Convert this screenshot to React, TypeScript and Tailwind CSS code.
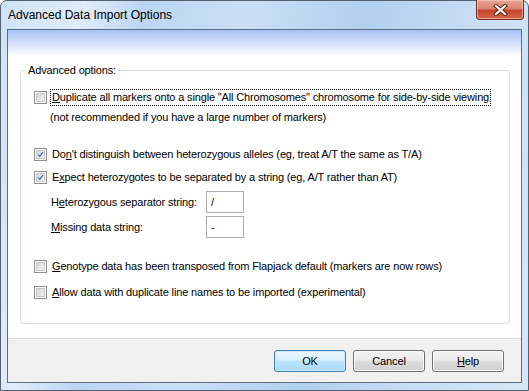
import React from "react";

function Check({ checked }: { checked?: boolean }) {
  return (
    <div className="w-[13px] h-[13px] border border-[#8e8f8f] bg-white p-[1px] shrink-0">
      <div className="w-full h-full border border-[#c9c9c9] bg-[linear-gradient(135deg,#d5d5d5,#f4f4f4)] relative">
        {checked && (
          <svg viewBox="0 0 9 9" className="absolute inset-0 w-full h-full">
            <path d="M1.5 4.6 L3.6 6.8 L7.6 1.6" fill="none" stroke="#4a64a8" strokeWidth="1.6" />
          </svg>
        )}
      </div>
    </div>
  );
}

function Row({ checked, children, focus, cls }: { checked?: boolean; children: React.ReactNode; focus?: boolean; cls: string }) {
  return (
    <div className={"flex items-center h-[20px] gap-[3px] " + cls}>
      <Check checked={checked} />
      <span className={"px-[1px] leading-[15px] " + (focus ? "border border-dotted border-black" : "border border-transparent")}>
        {children}
      </span>
    </div>
  );
}

function Btn({ children, def }: { children: React.ReactNode; def?: boolean }) {
  return (
    <div
      className={
        "w-[72px] h-[22px] rounded-[3px] border flex items-center justify-center " +
        (def
          ? "border-[#3c7fb1] bg-[linear-gradient(to_bottom,#eaf6fd_0%,#d9f0fc_45%,#bee6fd_50%,#a7d9f5_100%)] shadow-[inset_0_0_0_1px_#d0ecfa]"
          : "border-[#707070] bg-[linear-gradient(to_bottom,#f2f2f2_0%,#ebebeb_45%,#dddddd_50%,#cfcfcf_100%)] shadow-[inset_0_0_0_1px_#fcfcfc]")
      }
    >
      {children}
    </div>
  );
}

export default function App() {
  return (
    <div className="w-[529px] h-[391px] font-['Liberation_Sans',Arial,sans-serif] text-[11px] tracking-[-0.15px] text-black">
      <div className="h-full flex flex-col rounded-t-[7px] border border-[#52606f] bg-[linear-gradient(100deg,#cfe2f6_0%,#dfecf9_14%,#bcd6f2_24%,#c9dff5_42%,#b2cfef_62%,#c7ddf4_80%,#d6e7f7_100%)] px-[6px] pb-[7px]">
        <div className="h-[28px] flex items-start justify-between">
          <div className="pt-[7px] pl-[1px] text-[12px] leading-[15px] tracking-normal">Advanced Data Import Options</div>
          <div className="mt-[-1px] mr-[-2px] w-[48px] h-[20px] rounded-b-[4px] border border-[#7f2f22] border-t-0 bg-[linear-gradient(to_bottom,#e9a593_0%,#d98571_45%,#c7432b_55%,#d46a4f_100%)] shadow-[inset_0_0_0_1px_rgba(255,220,210,0.5)] flex items-center justify-center">
            <svg width="15" height="12" viewBox="0 0 15 12">
              <path d="M3 2 L12 10 M12 2 L3 10" stroke="#5a2418" strokeWidth="4.2" strokeLinecap="square" />
              <path d="M3 2 L12 10 M12 2 L3 10" stroke="#ffffff" strokeWidth="2.2" strokeLinecap="square" />
            </svg>
          </div>
        </div>
        <div className="flex-1 flex flex-col border border-[#5d6d83] bg-white">
          <div className="flex-1 bg-[linear-gradient(to_bottom,#a7c0f4_0px,#cfddfa_12px,#ffffff_26px)] pt-[32px] pl-[12px] pr-[11px]">
            <fieldset className="border border-[#d5dfe5] rounded-[3px] pb-[21px]">
              <legend className="ml-[5px] px-[2px] leading-[16px]">Advanced options:</legend>
              <div className="pt-[9px] pl-[13px]">
                <Row cls="" focus>
                  <span className="underline">D</span>uplicate all markers onto a single "All Chromosomes" chromosome for side-by-side viewing
                </Row>
                <div className="h-[20px] flex items-center pl-[16px]">(not recommended if you have a large number of markers)</div>
                <Row cls="mt-[17px]" checked>
                  Do<span className="underline">n</span>'t distinguish between heterozygous alleles (eg, treat A/T the same as T/A)
                </Row>
                <Row cls="mt-[3px]" checked>
                  E<span className="underline">x</span>pect heterozygotes to be separated by a string (eg, A/T rather than AT)
                </Row>
                <div className="mt-[4px] h-[22px] flex items-center pl-[17px]">
                  <div className="w-[155px]">
                    H<span className="underline">e</span>terozygous separator string:
                  </div>
                  <div className="w-[38px] h-[22px] border border-[#abadb3] bg-white flex items-center pl-[4px]">/</div>
                </div>
                <div className="mt-[3px] h-[22px] flex items-center pl-[17px]">
                  <div className="w-[155px]">
                    <span className="underline">M</span>issing data string:
                  </div>
                  <div className="w-[38px] h-[22px] border border-[#abadb3] bg-white flex items-center pl-[4px]">-</div>
                </div>
                <Row cls="mt-[18px]">
                  <span className="underline">G</span>enotype data has been transposed from Flapjack default (markers are now rows)
                </Row>
                <Row cls="mt-[6px]">
                  <span className="underline">A</span>llow data with duplicate line names to be imported (experimental)
                </Row>
              </div>
            </fieldset>
          </div>
          <div className="h-[44px] border-t border-[#dfdfdf] bg-[#f0f0f0] flex justify-end items-start pt-[11px] pr-[17px] gap-[7px]">
            <Btn def>OK</Btn>
            <Btn>Cancel</Btn>
            <Btn>
              <span>
                <span className="underline">H</span>elp
              </span>
            </Btn>
          </div>
        </div>
      </div>
    </div>
  );
}
